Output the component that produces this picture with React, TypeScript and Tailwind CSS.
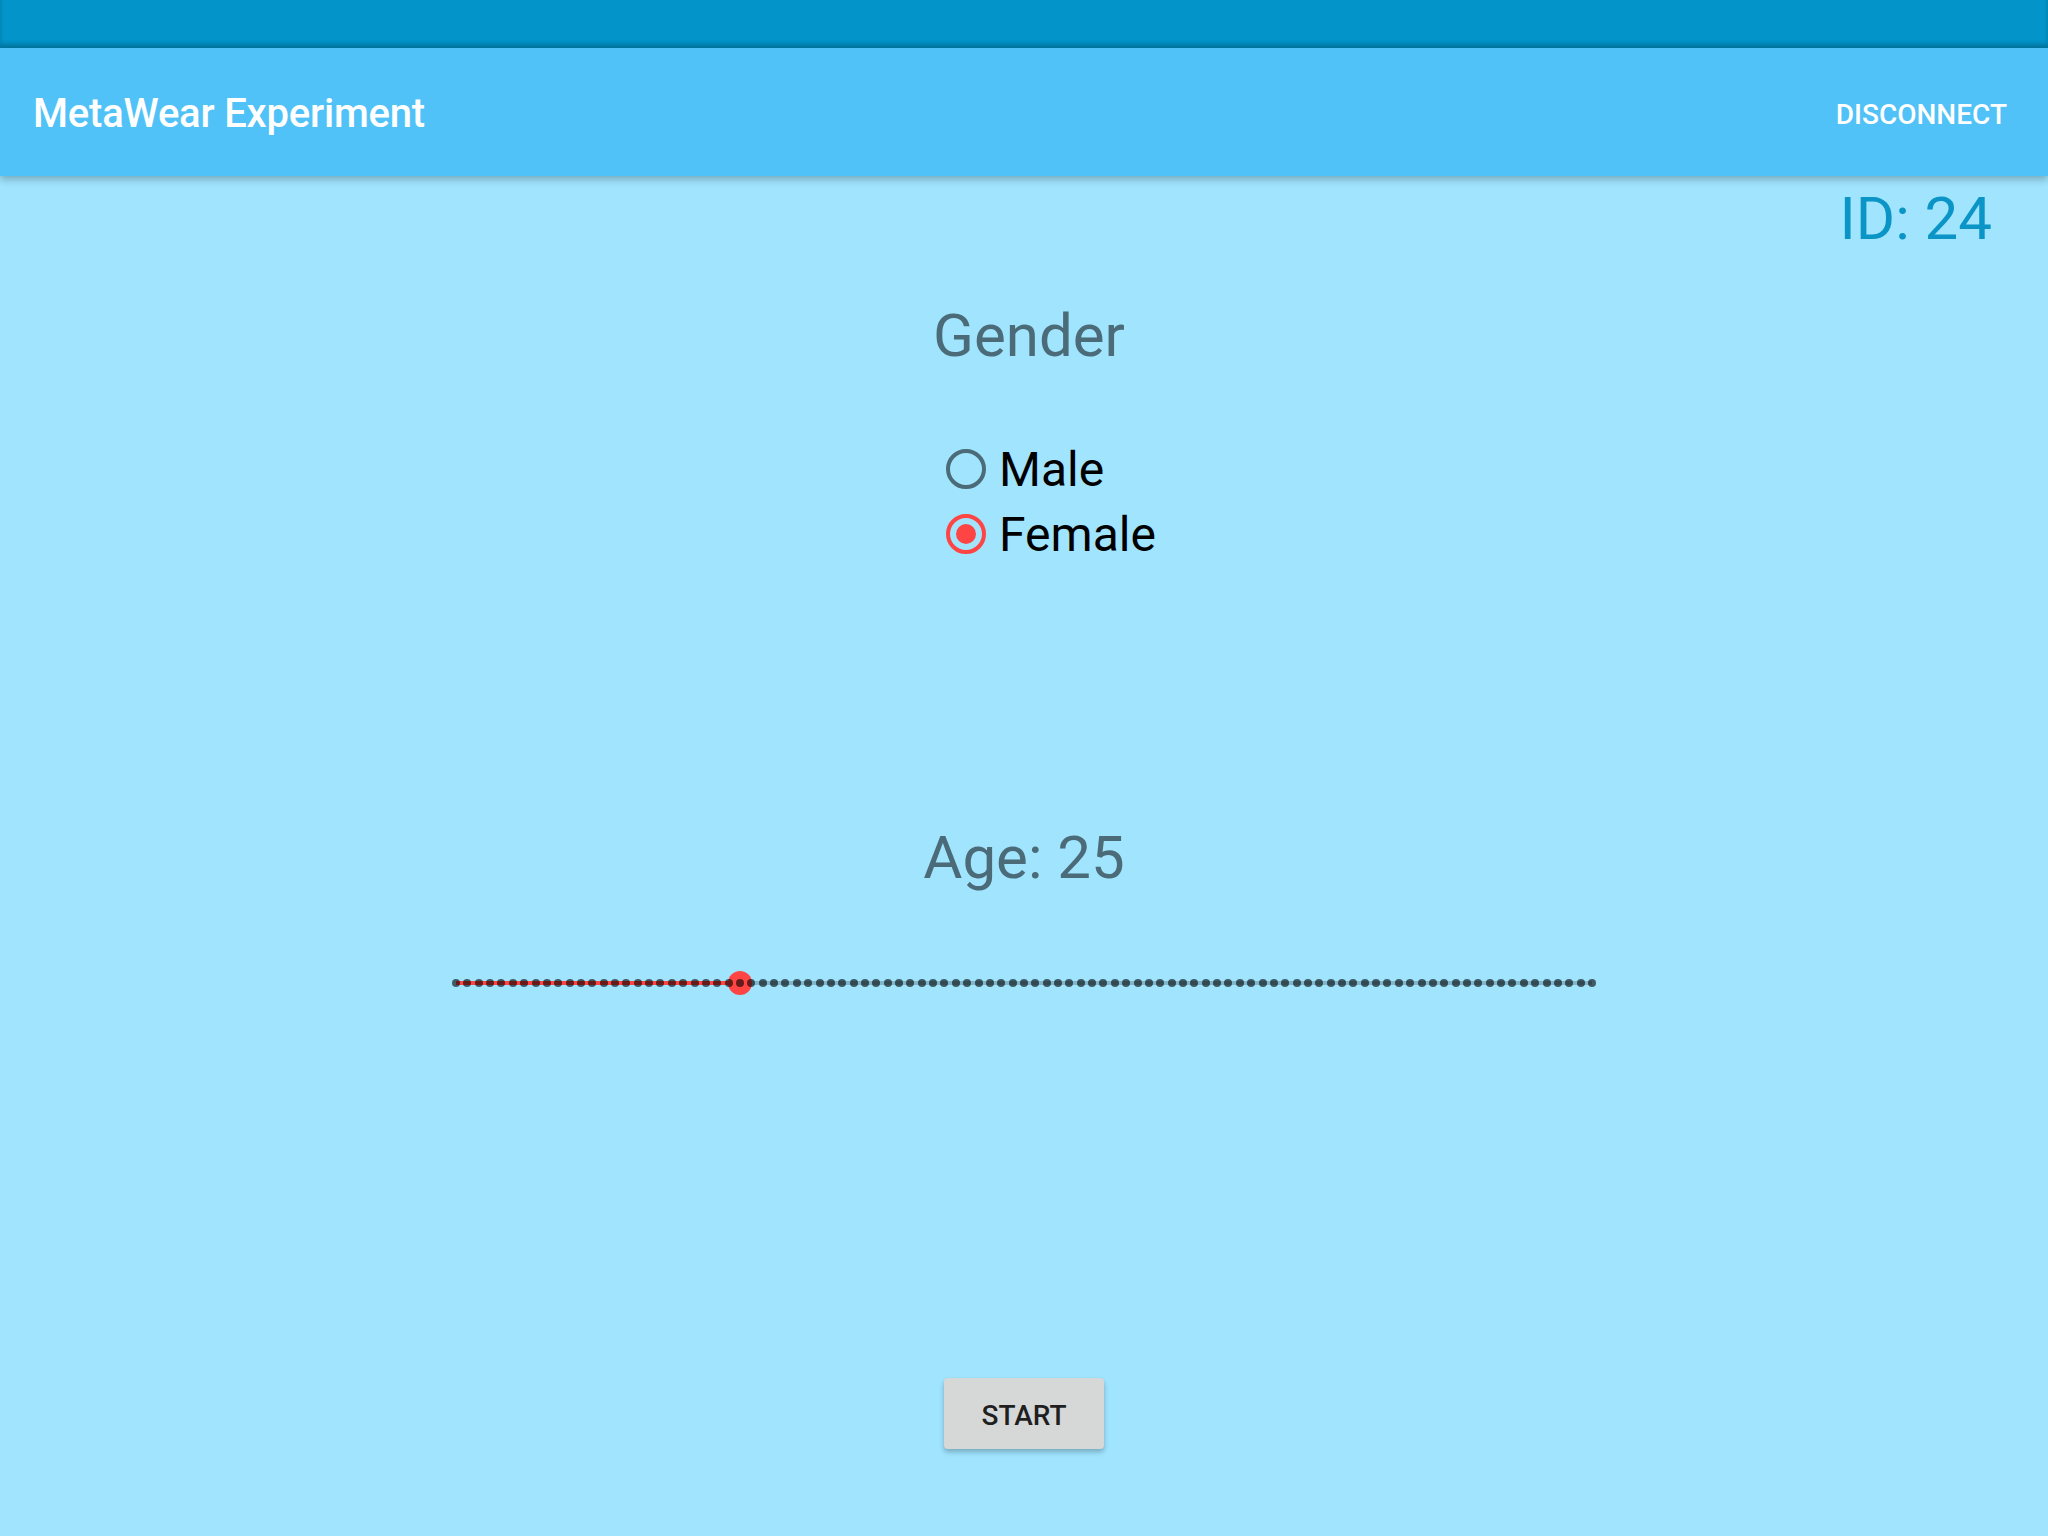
import React, { useState } from 'react';

// Radio option used in the gender group
const RadioRow: React.FC<{ label: string; checked: boolean; onSelect: () => void }> = ({ label, checked, onSelect }) => {
    return (
        <button type="button" onClick={onSelect} className="h-[65px] flex items-center gap-[13px] text-left">
            <span
                className={
                    checked
                        ? 'w-[40px] h-[40px] rounded-full border-[4px] border-[#ff4444] flex items-center justify-center'
                        : 'w-[40px] h-[40px] rounded-full border-[4px] border-[#4b6b78] flex items-center justify-center'
                }
            >
                {checked && <span className="w-[20px] h-[20px] rounded-full bg-[#ff4444]" />}
            </span>
            <span className="text-[48px] leading-none text-black pt-[3px]">{label}</span>
        </button>
    );
};

// Discrete slider, 0..100 with a tick for every step
const AgeSlider: React.FC<{ value: number }> = ({ value }) => {
    const ticks = Array.from({ length: 101 }, (_, i) => i);
    const pct = value / 100;
    return (
        <div className="relative w-[1144px] h-[24px]">
            <div className="absolute left-[4px] right-[4px] top-[10px] h-[4px] bg-black/20" />
            <div
                className="absolute left-[4px] top-[10px] h-[4px] bg-[#ff4444]"
                style={{ width: `${pct * 1136}px` }}
            />
            <div
                className="absolute top-0 w-[24px] h-[24px] rounded-full bg-[#ff4444]"
                style={{ left: `${4 + pct * 1136 - 12}px` }}
            />
            <div className="absolute inset-0 flex items-center justify-between">
                {ticks.map(t => (
                    <span key={t} className="w-[8px] h-[8px] rounded-full bg-black/60" />
                ))}
            </div>
        </div>
    );
};

export default function App() {
    const [gender, setGender] = useState<'male' | 'female'>('female');
    const age = 25;

    return (
        <div className="w-[2048px] h-[1536px] flex flex-col bg-[#a0e4fe] overflow-hidden" style={{ fontFamily: 'Roboto, "Noto Sans", sans-serif' }}>
            <div className="h-[48px] bg-[#0394c9] shadow-[inset_0_-4px_4px_rgba(0,0,0,0.18)]" />

            <div className="relative z-10 h-[128px] bg-[#50c2f7] flex items-center justify-between pl-[33px] pr-[41px] shadow-[0_3px_8px_rgba(0,0,0,0.28)]">
                <h1 className="text-[40px] leading-none font-medium text-white pt-[4px] tracking-[-0.2px]">MetaWear Experiment</h1>
                <button type="button" className="text-[28px] leading-none font-medium text-white pt-[5px]">DISCONNECT</button>
            </div>

            <div className="flex-1 flex flex-col items-center">
                <div className="w-full flex justify-end pt-[13px] pr-[56px]">
                    <span className="text-[60px] leading-none text-[#0b94c6]">ID: 24</span>
                </div>

                <h2 className="mt-[57px] pl-[10px] text-[60px] leading-none text-[#4b6b78]">Gender</h2>

                <div className="mt-[70px] ml-[54px] flex flex-col">
                    <RadioRow label="Male" checked={gender === 'male'} onSelect={() => setGender('male')} />
                    <RadioRow label="Female" checked={gender === 'female'} onSelect={() => setGender('female')} />
                </div>

                <p className="mt-[262px] text-[60px] leading-none text-[#4b6b78]">Age: {age}</p>

                <div className="mt-[83px]">
                    <AgeSlider value={age} />
                </div>

                <button
                    type="button"
                    className="mt-[383px] w-[160px] h-[71px] pt-[5px] rounded-[4px] bg-[#d6d7d7] text-[28px] leading-none font-medium text-[#1f1f1f] shadow-[0_3px_5px_rgba(0,0,0,0.25)]"
                >
                    START
                </button>
            </div>
        </div>
    );
}
